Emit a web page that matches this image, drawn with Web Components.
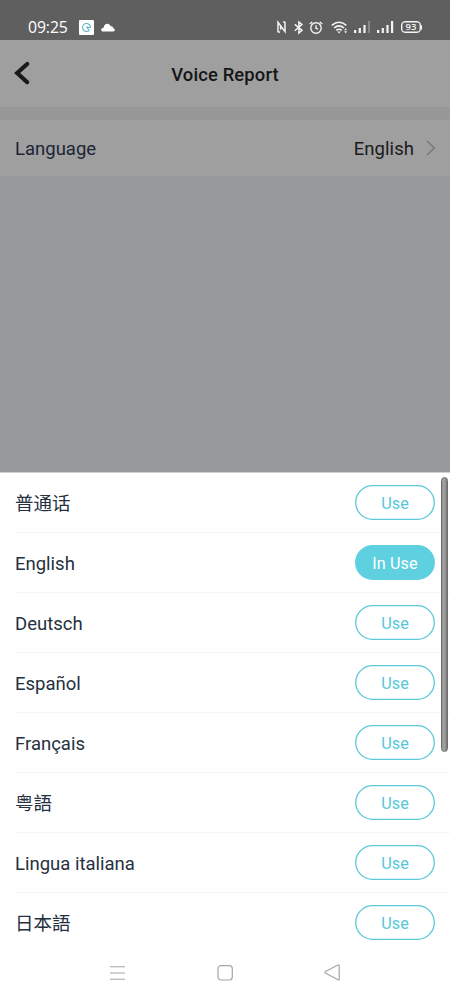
<!DOCTYPE html>
<html lang="en">
<head>
<meta charset="utf-8">
<title>Voice Report</title>
<style>
html,body{margin:0;height:100%}
body{font-family:Roboto,"Noto Sans CJK SC",sans-serif;background:#98999b}
</style>
</head>
<body>
<voice-app></voice-app>
<script>
const define = (name, html, setup) => customElements.define(name, class extends HTMLElement {
  constructor() {
    super();
    const t = document.createElement('template');
    t.innerHTML = html;
    this.attachShadow({mode: 'open'}).append(t.content.cloneNode(true));
    if (setup) setup(this);
  }
});

define('status-bar', `
<style>
:host{display:flex;height:40px;box-sizing:border-box;background:#5f5f5f;color:#fff;padding:14px 28px 0;align-items:center;justify-content:space-between;flex:none}
.left{display:flex;align-items:center;height:26px}
.time{font:15.8px/26px "Open Sans",sans-serif;width:50px;white-space:nowrap;letter-spacing:-.1px}
svg{display:block;flex:none;overflow:visible}
.right{display:flex;align-items:center;height:26px}
.bat{box-sizing:border-box;width:20px;height:12px;border:1px solid #f4f4f4;box-shadow:inset 0 0 0 .4px #f4f4f4;border-radius:4px;font:600 9.5px/10px "Open Sans",sans-serif;text-align:center;color:#f4f4f4}
.cap{width:1px;height:5px;background:#eee;border-radius:0 1px 1px 0}
</style>
<div class="left"><span class="time">09:25</span>
<svg style="margin-left:1px" width="15" height="15"><rect width="15" height="15" rx="1" fill="#fff"/><path d="M10.3 10.4A4 4 0 1 1 11.6 7.3M7.2 6.8L11.6 7.7M7.6 7L10.6 11" fill="none" stroke="#62b5c7" stroke-width="1.1"/></svg>
<svg style="margin-left:7px" width="14" height="9" viewBox="0 0 14 9"><path d="M2.5 8.5C-.8 8.5-.5 4.8 2.6 4.7C3 .1 8.4-.8 9.7 3.3C12.1 3 12.3 5 12.2 5.3C14.6 5.6 14.2 8.5 12.3 8.5Z" fill="#fff"/></svg></div>
<div class="right">
<svg width="10" height="12" fill="none" stroke="#f4f4f4" stroke-width="1.5"><path d="M3 11.2L1 10.6V1.2L8 10.6V1.2L6 .6M3.6 8.8V5"/></svg>
<svg style="margin-left:7px" width="10" height="13" fill="none" stroke="#f4f4f4" stroke-width="1.5"><path d="M.8 3.3L8 9.3L4.9 12V1L8 3.6L.8 9.7"/></svg>
<svg style="margin-left:5px" width="14" height="13" fill="none" stroke="#f4f4f4" stroke-width="1.4"><circle cx="7" cy="7" r="5.2"/><path d="M7 4.2V7.3L9 8.2M.8 3L3.2 1M13.2 3L10.8 1"/></svg>
<svg style="margin-left:8px" width="19" height="13" fill="none" stroke="#f4f4f4" stroke-width="1.6"><path d="M.8 4.3Q8-1.8 15.4 4.3M3 7Q8 2.7 13 7M5.3 9.3Q8 7.1 10.8 9.3"/><path d="M6.3 10.6H9.8L8 12.5Z" fill="#f4f4f4" stroke="none"/><path d="M13 9.2L14.6 7.1L16.2 9.2ZM13 10.3L14.6 12.4L16.2 10.3Z" fill="#ddd" stroke="none"/></svg>
<svg style="margin-left:4px" width="16" height="12" fill="#f4f4f4"><rect y="9" width="2.2" height="3"/><rect x="4.7" y="7" width="2.2" height="5"/><rect x="9.4" y="4" width="2.2" height="8"/><rect x="14" width="2" height="12" fill="#898989"/></svg>
<svg style="margin-left:7px" width="17" height="12" fill="#f4f4f4"><rect y="9" width="2.2" height="3"/><rect x="4.7" y="7" width="2.2" height="5"/><rect x="9.4" y="4" width="2.2" height="8"/><rect x="14" width="2.2" height="12"/></svg>
<div class="bat" style="margin-left:7px">93</div><span class="cap"></span>
</div>`);

define('app-header', `
<style>
:host{display:grid;grid-template-columns:40px 1fr 40px;align-items:center;height:67px;background:#9f9f9f;color:#151515;flex:none}
h1{margin:0;font-size:18.4px;line-height:24px;font-weight:500;text-align:center;padding-top:3px;letter-spacing:.14px}
svg{display:block;margin:-1px 0 0 14px}
</style>
<svg width="18" height="26" viewBox="0 0 18 26" fill="none" stroke="#191919" stroke-width="4.2" stroke-linecap="round"><path d="M13.2 4L3.2 13L13.2 22.2"/></svg>
<h1><slot></slot></h1>`);

define('setting-row', `
<style>
:host{display:flex;align-items:center;box-sizing:border-box;height:56px;margin-top:13px;padding:1px 14px 0 15px;background:#9f9f9f;font-size:18.5px;line-height:24px;color:#1d2535;flex:none}
.v{margin-left:auto;color:#1b1b1b;letter-spacing:.06px}
svg{margin:-1px 0 0 12px}
</style>
<span><slot></slot></span><span class="v"><slot name="value"></slot></span>
<svg width="10" height="16" fill="none" stroke="#777" stroke-width="1.4"><path d="M1 1L8.3 8L1 15"/></svg>`);

define('use-button', `
<style>
:host{display:block;position:relative;width:80px;height:35px;color:#55c8d8;font-size:16.2px;line-height:37px;text-align:center;letter-spacing:.1px}
svg{position:absolute;inset:0;display:block}
rect{fill:#fff;stroke:#5bc9d9;stroke-width:1.3}
:host([active]){color:#fff}
:host([active]) rect{fill:#5fd0df;stroke:#5fd0df}
span{position:relative}
</style><svg width="80" height="35"><rect x=".7" y=".7" width="78.6" height="33.6" rx="16.8"/></svg><span><slot></slot></span>`);

define('language-row', `
<style>
:host{display:flex;align-items:center;justify-content:space-between;box-sizing:border-box;height:60px;margin-left:15px;padding:1px 15px 0 0;border-bottom:1px solid #f5f5f5;color:#253040;font-size:18.5px;flex:none}
:host(:last-child){border-bottom-color:transparent}
span{line-height:24px;padding-top:1px}
use-button{margin-top:-1px}
</style><span><slot></slot></span><use-button>Use</use-button>`, el => {
  const b = el.shadowRoot.querySelector('use-button');
  if (el.hasAttribute('selected')) { b.setAttribute('active', ''); b.textContent = 'In Use'; }
});

define('language-sheet', `
<style>
:host{display:block;position:relative;background:#fff;height:480px;flex:none;border-top:1px solid #d0d0d0;box-sizing:border-box}
.bar{position:absolute;right:2px;top:4px;width:7px;height:275px;box-sizing:border-box;border-radius:4px;border:1px solid #6d6d6d;background:linear-gradient(90deg,#929292,#a5a5a5 45%,#777)}
.list{display:flex;flex-direction:column}
</style><div class="list"><slot></slot></div><div class="bar"></div>`);

define('nav-bar', `
<style>
:host{display:flex;flex:1;background:#fff;align-items:center;justify-content:space-between;padding:0 109px 7px;box-sizing:border-box}
svg{display:block}
</style>
<svg width="17" height="16" stroke="#a5a5a5" stroke-width="1.1"><path d="M1 1.7H16M1 8H16M1 14.3H16"/></svg>
<svg width="17" height="16" fill="none" stroke="#a5a5a5" stroke-width="1.2"><rect x="1" y=".7" width="14.3" height="14.3" rx="3"/></svg>
<svg width="17" height="17" fill="none" stroke="#a5a5a5" stroke-width="1.2" stroke-linejoin="round"><path d="M14 1Q15.2 .2 15.2 1.8V15Q15.2 16.5 14 15.7L1.4 9Q.1 8.2 1.4 7.5Z"/></svg>`);

define('voice-app', `
<style>
:host{display:flex;flex-direction:column;width:450px;height:1000px;overflow:hidden;background:#98999b}
.fill{flex:none;height:296px}
.top{background:#989898}
</style>
<status-bar></status-bar>
<div class="top"><app-header>Voice Report</app-header>
<setting-row>Language<span slot="value">English</span></setting-row></div>
<div class="fill"></div>
<language-sheet>
<language-row>普通话</language-row>
<language-row selected>English</language-row>
<language-row>Deutsch</language-row>
<language-row>Español</language-row>
<language-row>Français</language-row>
<language-row>粤語</language-row>
<language-row>Lingua italiana</language-row>
<language-row>日本語</language-row>
</language-sheet>
<nav-bar></nav-bar>`);
</script>
</body>
</html>
